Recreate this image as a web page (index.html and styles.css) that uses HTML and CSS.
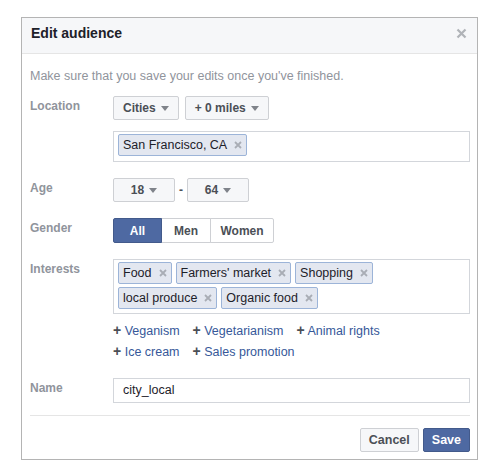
FILE: index.html
```html
<!DOCTYPE html>
<html lang="en">

<head>
    <meta charset="UTF-8">
    <title>Edit audience</title>
    <link rel="stylesheet" href="styles.css">
</head>

<body>
    <div class="dialog">
        <div class="dialog-header">
            <h2>Edit audience</h2>
            <svg class="close" width="11" height="11" viewBox="0 0 11 11">
                <path d="M1.5 1.5 L9.5 9.5 M9.5 1.5 L1.5 9.5" stroke="#b0b3b8" stroke-width="2.2" />
            </svg>
        </div>
        <div class="dialog-body">
            <p class="hint">Make sure that you save your edits once you've finished.</p>

            <div class="row">
                <div class="label">Location</div>
                <div class="field">
                    <div class="btn-group">
                        <span class="btn select">Cities <i class="caret"></i></span>
                        <span class="btn select">+ 0 miles <i class="caret"></i></span>
                    </div>
                    <div class="token-box location-box">
                        <span class="token">San Francisco, CA <svg class="x" viewBox="0 0 8 8"><path d="M1 1L7 7M7 1L1 7" /></svg></span>
                    </div>
                </div>
            </div>

            <div class="row">
                <div class="label">Age</div>
                <div class="field age">
                    <span class="btn select age-select">18 <i class="caret"></i></span>
                    <span class="dash">-</span>
                    <span class="btn select age-select">64 <i class="caret"></i></span>
                </div>
            </div>

            <div class="row">
                <div class="label">Gender</div>
                <div class="field">
                    <div class="segmented">
                        <span class="seg active">All</span>
                        <span class="seg">Men</span>
                        <span class="seg wide">Women</span>
                    </div>
                </div>
            </div>

            <div class="row">
                <div class="label">Interests</div>
                <div class="field">
                    <div class="token-box">
                        <span class="token">Food <svg class="x" viewBox="0 0 8 8"><path d="M1 1L7 7M7 1L1 7" /></svg></span>
                        <span class="token">Farmers' market <svg class="x" viewBox="0 0 8 8"><path d="M1 1L7 7M7 1L1 7" /></svg></span>
                        <span class="token">Shopping <svg class="x" viewBox="0 0 8 8"><path d="M1 1L7 7M7 1L1 7" /></svg></span>
                        <span class="token">local produce <svg class="x" viewBox="0 0 8 8"><path d="M1 1L7 7M7 1L1 7" /></svg></span>
                        <span class="token">Organic food <svg class="x" viewBox="0 0 8 8"><path d="M1 1L7 7M7 1L1 7" /></svg></span>
                    </div>
                    <div class="suggestions">
                        <a class="suggest"><b>+</b> Veganism</a>
                        <a class="suggest"><b>+</b> Vegetarianism</a>
                        <a class="suggest"><b>+</b> Animal rights</a>
                        <a class="suggest"><b>+</b> Ice cream</a>
                        <a class="suggest"><b>+</b> Sales promotion</a>
                    </div>
                </div>
            </div>

            <div class="row name-row">
                <div class="label">Name</div>
                <div class="field">
                    <div class="text-input">city_local</div>
                </div>
            </div>

            <div class="footer">
                <span class="btn">Cancel</span>
                <span class="btn primary">Save</span>
            </div>
        </div>
    </div>
</body>

</html>
```

FILE: styles.css
```css
body {
    margin: 0;
    font-family: "Liberation Sans", Arial, sans-serif;
    font-size: 12px;
    color: #1d2129;
    background: #fff;
}

.dialog {
    width: 455px;
    margin: 17px 0 0 21px;
    border: 1px solid #b4b4b4;
}

.dialog-header {
    display: flex;
    align-items: center;
    justify-content: space-between;
    box-sizing: border-box;
    height: 36px;
    padding: 0 10px 5px 9px;
    background: #f6f7f9;
    border-bottom: 1px solid #e5e5e5;
}

.dialog-header h2 {
    margin: 0;
    font-size: 14px;
    font-weight: bold;
    color: #1d2129;
}

.dialog-body {
    padding: 14px 7px 7px 8px;
}

.hint {
    margin: 0 0 12px;
    line-height: 16px;
    font-size: 12.5px;
    color: #90949c;
}

.row {
    display: flex;
    margin-bottom: 16px;
}

.label {
    width: 83px;
    flex: none;
    padding-top: 3px;
    font-weight: bold;
    color: #90949c;
}

.field {
    flex: 1;
}

.btn {
    display: inline-flex;
    align-items: center;
    justify-content: center;
    box-sizing: border-box;
    height: 24px;
    padding: 0 9px;
    background: #f6f7f9;
    border: 1px solid #ced0d4;
    border-radius: 2px;
    font-weight: bold;
    color: #4b4f56;
}

.btn-group {
    display: flex;
    gap: 6px;
    margin-bottom: 11px;
}

.caret {
    display: inline-block;
    margin-left: 5px;
    border-left: 4px solid transparent;
    border-right: 4px solid transparent;
    border-top: 5px solid #7f838a;
}

.age {
    display: flex;
    align-items: center;
}

.age-select {
    width: 62px;
}

.dash {
    width: 12px;
    text-align: center;
    font-weight: bold;
    color: #4b4f56;
}

.segmented {
    display: flex;
}

.seg {
    display: flex;
    align-items: center;
    justify-content: center;
    box-sizing: border-box;
    width: 50px;
    height: 25px;
    margin-left: -1px;
    background: #fff;
    border: 1px solid #ced0d4;
    font-weight: bold;
    color: #4b4f56;
}

.seg:first-child {
    width: 49px;
    margin-left: 0;
    border-radius: 2px 0 0 2px;
}

.seg.wide {
    width: 64px;
    border-radius: 0 2px 2px 0;
}

.seg.active {
    position: relative;
    background: #4e69a2;
    border-color: #435a8b;
    color: #fff;
}

.token-box {
    display: flex;
    flex-wrap: wrap;
    gap: 3px 4px;
    padding: 2px 4px 4px;
    border: 1px solid #d3d6db;
}

.location-box {
    padding-bottom: 5px;
}

.token {
    display: inline-flex;
    align-items: center;
    box-sizing: border-box;
    height: 22px;
    padding: 0 4px;
    background: #e3e7f0;
    border: 1px solid #9cb4d8;
    border-radius: 2px;
    font-size: 12.5px;
    color: #1d2129;
}

.x {
    width: 8px;
    height: 8px;
    margin-left: 7px;
    stroke: #a9adb5;
    stroke-width: 1.8;
}

.suggestions {
    display: flex;
    flex-wrap: wrap;
    width: 285px;
    margin-top: 6px;
    line-height: 20px;
    font-size: 12.5px;
}

.suggest {
    color: #365899;
    margin-right: 13px;
}

.suggest b {
    color: #4b4f56;
    font-size: 14px;
}

.suggest:nth-child(3) {
    margin-right: 0;
}

.name-row {
    margin-top: 15px;
    margin-bottom: 12px;
}

.text-input {
    box-sizing: border-box;
    height: 25px;
    line-height: 23px;
    padding: 0 9px;
    border: 1px solid #d3d6db;
    font-size: 12.5px;
}

.footer {
    display: flex;
    justify-content: flex-end;
    gap: 4px;
    padding-top: 12px;
    border-top: 1px solid #e5e5e5;
}

.footer .btn {
    padding: 0 8px;
    font-size: 12.5px;
}

.btn.primary {
    background: #4e69a2;
    border-color: #435a8b;
    color: #fff;
}
```
